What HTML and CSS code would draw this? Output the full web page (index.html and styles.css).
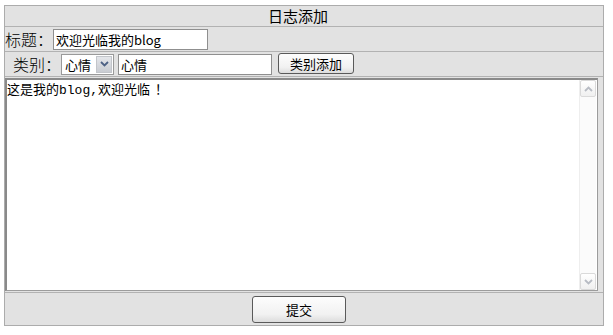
FILE: index.html
```html
<!DOCTYPE html>
<html>
<head>
<meta charset="utf-8">
<link rel="stylesheet" href="styles.css">
</head>
<body>
<div class="panel">
  <div class="row row-title"><span class="title">日志添加</span></div>
  <div class="row row-field">
    <span class="label">标题：</span>
    <input class="text title-input" type="text" value="欢迎光临我的blog">
  </div>
  <div class="row row-field row-cat">
    <span class="label">类别：</span>
    <div class="select">
      <span class="select-text">心情</span>
      <span class="select-btn"><svg width="9" height="6" viewBox="0 0 9 6"><path d="M1 1 L4.5 4.5 L8 1" fill="none" stroke="#4d6185" stroke-width="1.8"/></svg></span>
    </div>
    <input class="text cat-input" type="text" value="心情">
    <button class="btn cat-btn">类别添加</button>
  </div>
  <div class="row row-body">
    <div class="editor">
      <div class="editor-text">这是我的blog,欢迎光临<span class="bang">！</span></div>
      <div class="scrollbar">
        <span class="sb-btn"><svg width="9" height="6" viewBox="0 0 9 6"><path d="M1 5 L4.5 1.5 L8 5" fill="none" stroke="#b8bcc4" stroke-width="1.8"/></svg></span>
        <span class="sb-track"></span>
        <span class="sb-btn"><svg width="9" height="6" viewBox="0 0 9 6"><path d="M1 1 L4.5 4.5 L8 1" fill="none" stroke="#b8bcc4" stroke-width="1.8"/></svg></span>
      </div>
    </div>
  </div>
  <div class="row row-submit"><button class="btn submit-btn">提交</button></div>
</div>
</body>
</html>
```

FILE: styles.css
```css
* { box-sizing: border-box; }
body {
  margin: 0;
  background: #ffffff;
  font-family: "Noto Sans CJK SC", "DejaVu Sans", sans-serif;
  color: #000;
}
.panel {
  margin: 5px 0 0 4px;
  width: 600px;
  border: 1px solid #acacac;
  background: #e2e2e2;
}
.row {
  border-bottom: 1px solid #b2b2b2;
  display: flex;
  align-items: center;
}
.row:last-child { border-bottom: none; }
.row-title {
  height: 21px;
  justify-content: center;
  padding-right: 12px;
}
.title {
  font-size: 15px;
  line-height: 20px;
  font-weight: 400;
}
.row-field { height: 25px; }
.label {
  font-size: 16px;
  line-height: 20px;
  width: 48px;
  flex: none;
  font-weight: 300;
}
.row-cat { padding-left: 8px; }
.text {
  height: 21px;
  border: 1px solid #8f8f8f;
  background: #fff;
  font-family: "Noto Sans CJK SC", "DejaVu Sans", sans-serif;
  font-size: 13px;
  padding: 0 2px;
  margin: 0;
  outline: none;
  color: #000;
}
.title-input { width: 155px; margin-top: 1px; }
.select {
  width: 53px;
  height: 21px;
  border: 1px solid #9a9a9a;
  background: #fff;
  display: flex;
  align-items: center;
  padding: 1px;
}
.select-text {
  flex: 1;
  font-size: 13px;
  padding-left: 2px;
  line-height: 17px;
}
.select-btn {
  width: 16px;
  height: 17px;
  background: linear-gradient(#e4e6ea, #c9ccd2);
  border: 1px solid #c2c5ca;
  display: flex;
  align-items: center;
  justify-content: center;
}
.cat-input { width: 154px; margin-left: 4px; }
.btn {
  font-family: "Noto Sans CJK SC", "DejaVu Sans", sans-serif;
  font-size: 13px;
  color: #000;
  border: 1px solid #5a5a5a;
  border-radius: 3px;
  background: linear-gradient(#fdfdfd, #f1f1f1 70%, #dcdcdc);
  padding: 0;
  margin: 0;
}
.cat-btn { width: 76px; height: 21px; margin-left: 6px; margin-top: -2px; line-height: 17px; }
.row-body {
  height: 216px;
  align-items: flex-start;
  padding-top: 1px;
}
.editor {
  width: 593px;
  height: 213px;
  border: 1px solid #9c9c9c;
  border-left: 2px solid #8a8a8a;
  border-top: 2px solid #8a8a8a;
  background: #fff;
  display: flex;
}
.editor-text {
  flex: 1;
  font-family: "Liberation Mono", "Noto Sans CJK SC", monospace;
  font-size: 13px;
  line-height: 15px;
  padding: 1px 0 0 0;
}
.bang {
  font-family: "Noto Sans CJK SC", sans-serif;
  padding-left: 5px;
}
.scrollbar {
  width: 17px;
  display: flex;
  flex-direction: column;
  background: #fbfbfb;
  border-left: 1px solid #eeeeee;
  margin-right: 1px;
}
.sb-btn {
  height: 17px;
  display: flex;
  align-items: center;
  justify-content: center;
  background: linear-gradient(#ffffff, #f0f0f0);
  border: 1px solid #dadada;
  border-radius: 2px;
}
.sb-track { flex: 1; }
.row-submit {
  height: 32px;
  justify-content: center;
  padding-right: 10px;
}
.submit-btn { width: 94px; height: 27px; }
```
